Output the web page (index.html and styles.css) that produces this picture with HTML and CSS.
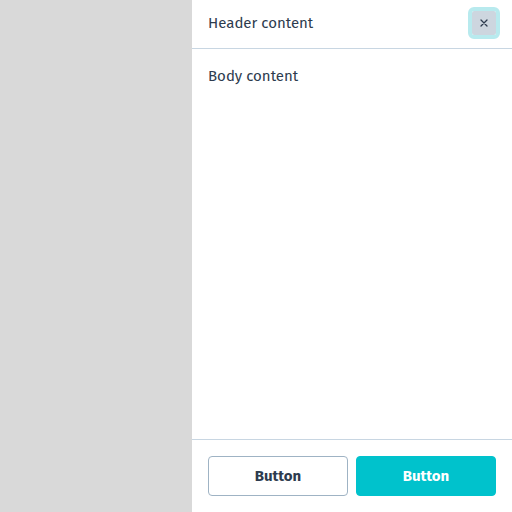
FILE: index.html
```html
<!DOCTYPE html>
<html>
<head>
<meta charset="utf-8">
<link rel="stylesheet" href="styles.css">
</head>
<body>
<div class="overlay"></div>
<aside class="drawer">
  <header class="drawer-header">
    <span class="title">Header content</span>
    <button class="close" aria-label="Close">
      <svg width="8" height="8" viewBox="0 0 8 8"><path d="M1 1L7 7M7 1L1 7" stroke="#2d3b4e" stroke-width="1.3" stroke-linecap="round"/></svg>
    </button>
  </header>
  <main class="drawer-body">Body content</main>
  <footer class="drawer-footer">
    <button class="btn btn-secondary">Button</button>
    <button class="btn btn-primary">Button</button>
  </footer>
</aside>
</body>
</html>
```
FILE: styles.css
```css
* { box-sizing: border-box; }
html, body { margin: 0; height: 100%; }
body {
  display: flex;
  font-family: "Fira Sans", "Lato", "Noto Sans", sans-serif;
  color: #2d3b4e;
  font-size: 15px;
}
.overlay {
  width: 192px;
  background: #d9d9d9;
}
.drawer {
  flex: 1;
  display: flex;
  flex-direction: column;
  background: #fff;
}
.drawer-header {
  height: 49px;
  border-bottom: 1px solid #c8d6e2;
  display: flex;
  align-items: center;
  justify-content: space-between;
  padding: 0 12px 0 16px;
}
.title { line-height: 20px; margin-top: -3px; }
.close {
  width: 32px;
  height: 32px;
  border: 4px solid #b8eaee;
  border-radius: 6px;
  background: #cdd6df;
  background-clip: padding-box;
  display: flex;
  align-items: center;
  justify-content: center;
  padding: 0;
  margin-top: -2px;
}
.close svg { display: block; }
.drawer-body {
  flex: 1;
  padding: 15px 16px 16px;
  line-height: 24px;
}
.drawer-footer {
  border-top: 1px solid #c8d6e2;
  padding: 16px;
  display: flex;
  gap: 8px;
}
.btn {
  flex: 1;
  height: 40px;
  border-radius: 4px;
  font-family: inherit;
  font-size: 15px;
  font-weight: 700;
}
.btn-secondary {
  background: #fff;
  border: 1px solid #9fb3c4;
  color: #2d3b4e;
}
.btn-primary {
  background: #00c2cc;
  border: 1px solid #00c2cc;
  color: #fff;
}
```
